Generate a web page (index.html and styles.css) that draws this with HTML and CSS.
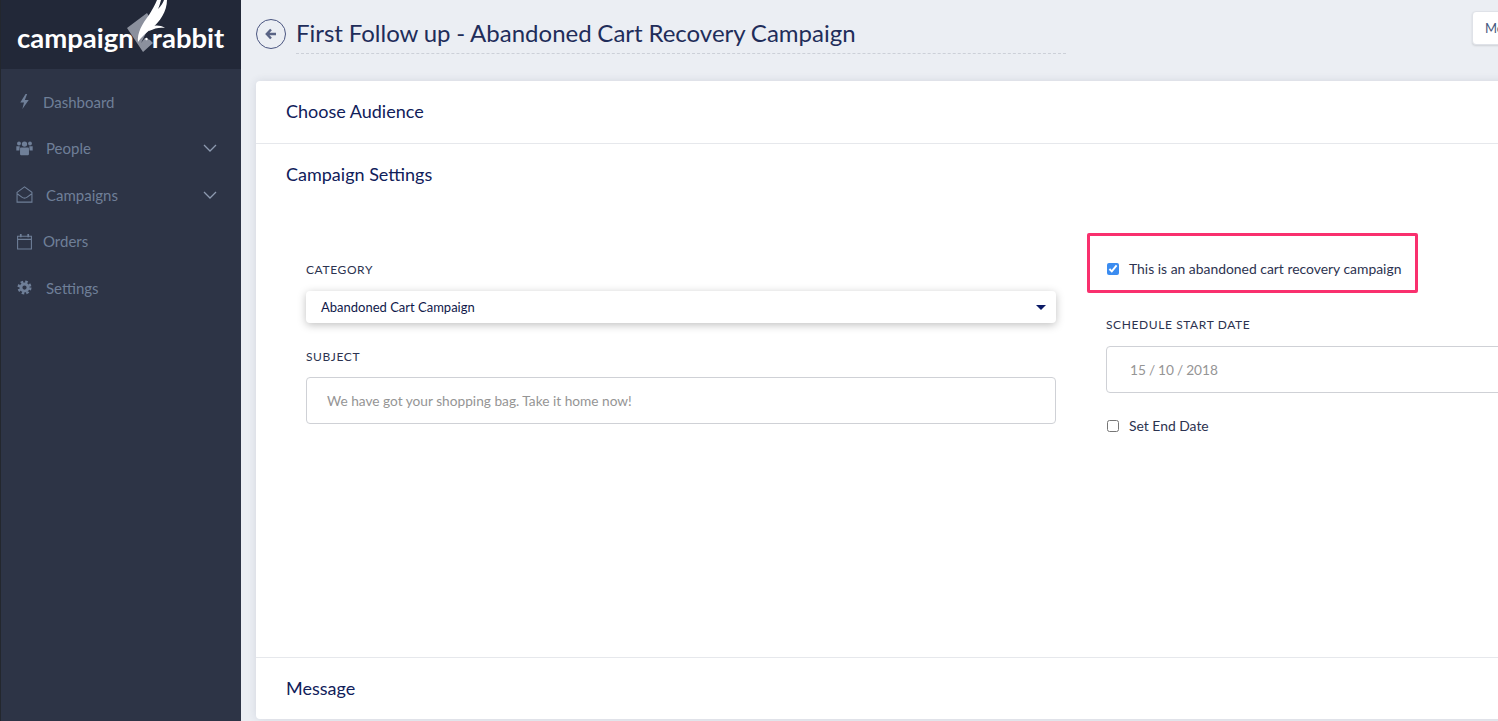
FILE: index.html
```html
<!DOCTYPE html>
<html lang="en">
<head>
    <meta charset="UTF-8">
    <meta name="viewport" content="width=device-width, initial-scale=1.0">
    <title>First Follow up - Abandoned Cart Recovery Campaign</title>
    <link rel="stylesheet" href="styles.css">
</head>
<body>
    <aside class="sidebar">
        <div class="logo">
            <span class="logo-word">campaign</span>
            <span class="logo-word">rabbit</span>
            <svg class="logo-mark" viewBox="120 0 60 60" width="60" height="60">
                <polygon fill="#8b909d" points="127,28 147,13 154,24 146,33 141,43 145,38 150,40 153,43 143,52"/>
                <path fill="#fff" d="M167 0C167 11 160 22 151 29C146 33 141 37 138 42C137 33 142 24 149 15C152 10 155 5 157 0L161 0C160 4 159 7 158 9C161 6 163 3 164 0Z"/>
                <path fill="#fff" d="M150 27C155 25 160 25 165 28C160 27 155 28 149 31Z"/>
                <circle fill="#fff" cx="146.500" cy="39" r="1.200"/>
            </svg>
        </div>
        <nav class="nav">
            <a class="nav-item nav-item-narrow">
                <svg class="nav-icon" viewBox="0 0 16 16"><polygon points="9,1 4,9 7.500,9 6,15 12,6.500 8.300,6.500 10.500,1"/></svg>
                Dashboard
            </a>
            <a class="nav-item">
                <svg class="nav-icon" viewBox="0 0 16 16">
                    <circle cx="2.800" cy="3.300" r="1.800"/><circle cx="13.200" cy="3.300" r="1.800"/><circle cx="8" cy="3.800" r="2.500"/>
                    <path d="M.3 5.800h3.200L3.200 9.800H.3zM12.500 5.800h3.200v4h-2.900zM4.800 7h6.400c.8 0 1 .6 1 1.300V13.500c0 .5-.3.800-.8.800H4.600c-.5 0-.8-.3-.8-.8V8.300C3.800 7.600 4 7 4.800 7z"/>
                </svg>
                People
                <svg class="chevron" viewBox="0 0 14 8"><path d="M1 1l6 6 6-6"/></svg>
            </a>
            <a class="nav-item">
                <svg class="nav-icon nav-icon-line" viewBox="0 0 16 16"><path d="M1 6L8 .8 15 6V15.200H1zM1.500 7.500l4 3c1.500 1.100 3.500 1.100 5 0l4-3"/></svg>
                Campaigns
                <svg class="chevron" viewBox="0 0 14 8"><path d="M1 1l6 6 6-6"/></svg>
            </a>
            <a class="nav-item nav-item-narrow">
                <svg class="nav-icon nav-icon-line" viewBox="0 0 16 16"><path d="M1.500 3h13v12h-13zM1.500 6h13"/><path class="cal-rings" d="M4.500 1v3M11.500 1v3"/></svg>
                Orders
            </a>
            <a class="nav-item">
                <svg class="nav-icon" viewBox="0 0 16 16">
                    <circle class="cog-teeth" cx="8" cy="8" r="5.500"/>
                    <circle class="cog-ring" cx="8" cy="8" r="3.400"/>
                </svg>
                Settings
            </a>
        </nav>
    </aside>

    <main class="main">
        <header class="topbar">
            <button class="back-btn" type="button">
                <svg viewBox="0 0 12 12" width="12" height="12"><path d="M6 1.500L1.800 6 6 10.500M2 6h9"/></svg>
            </button>
            <h1 class="page-title">First Follow up - Abandoned Cart Recovery Campaign</h1>
            <button class="top-btn" type="button">Me</button>
        </header>

        <div class="card">
            <section class="card-row">
                <h2>Choose Audience</h2>
            </section>
            <section class="card-row settings">
                <h2>Campaign Settings</h2>
                <div class="form-cols">
                    <div class="form-col form-col-left">
                        <label class="field-label">Category</label>
                        <div class="select-box">
                            Abandoned Cart Campaign
                            <span class="caret"></span>
                        </div>
                        <label class="field-label subject-label">Subject</label>
                        <div class="text-input">We have got your shopping bag. Take it home now!</div>
                    </div>
                    <div class="form-col">
                        <div class="highlight">
                            <label class="check-row">
                                <input type="checkbox" checked>
                                This is an abandoned cart recovery campaign
                            </label>
                        </div>
                        <label class="field-label schedule-label">Schedule start date</label>
                        <div class="text-input date-input">15 / 10 / 2018</div>
                        <label class="check-row end-date">
                            <input type="checkbox">
                            Set End Date
                        </label>
                    </div>
                </div>
            </section>
            <section class="card-row last-row">
                <h2>Message</h2>
            </section>
        </div>
    </main>
</body>
</html>
```

FILE: styles.css
```css
* {
    margin: 0;
    padding: 0;
    box-sizing: border-box;
}

html, body {
    height: 100%;
    overflow: hidden;
}

body {
    font-family: Lato, "Liberation Sans", sans-serif;
    background-color: #ebeef3;
    color: #10205a;
    display: flex;
}

/* Sidebar */
.sidebar {
    width: 241px;
    flex-shrink: 0;
    background-color: #2d3446;
    border-left: 1px solid #23272e;
}

.logo {
    position: relative;
    height: 69px;
    background-color: #222838;
    color: #fff;
    font-size: 27.500px;
    font-weight: 700;
    display: flex;
    align-items: center;
    gap: 18px;
    padding: 6px 0 0 16px;
}

.logo-word {
    position: relative;
    z-index: 1;
}

.logo-mark {
    position: absolute;
    left: 119px;
    top: 0;
}

.nav {
    padding-top: 9.400px;
}

.nav-item {
    height: 46.500px;
    display: flex;
    align-items: center;
    gap: 13px;
    padding: 0 24px 0 15px;
    color: #6f7f98;
    font-size: 15px;
}

.nav-item-narrow {
    gap: 10px;
}

.nav-icon {
    width: 17px;
    height: 17px;
    fill: #6f7f98;
    flex-shrink: 0;
}

.nav-icon-line {
    fill: none;
    stroke: #6f7f98;
    stroke-width: 1;
}

.cal-rings {
    stroke-width: 1.600;
}

.cog-teeth {
    fill: none;
    stroke: #6f7f98;
    stroke-width: 2.200;
    stroke-dasharray: 2.400 1.920;
}

.cog-ring {
    fill: none;
    stroke: #6f7f98;
    stroke-width: 2.800;
}

.chevron {
    width: 14px;
    height: 8px;
    margin-left: auto;
    fill: none;
    stroke: #8d9ab0;
    stroke-width: 1.300;
}

/* Main */
.main {
    flex: 1;
    min-width: 0;
    overflow: hidden;
}

.topbar {
    height: 81px;
    display: flex;
    align-items: flex-start;
    padding-left: 15px;
}

.back-btn {
    width: 30px;
    height: 30px;
    margin-top: 19px;
    flex-shrink: 0;
    border: 1px solid #4a5580;
    border-radius: 50%;
    background: none;
    display: flex;
    align-items: center;
    justify-content: center;
}

.back-btn svg {
    fill: none;
    stroke: #5a6485;
    stroke-width: 2.400;
}

.page-title {
    width: 770px;
    height: 54px;
    margin-left: 10px;
    padding-top: 16px;
    flex-shrink: 0;
    font-size: 24px;
    line-height: 34px;
    word-spacing: -0.400px;
    font-weight: 400;
    color: #1f2d5a;
    border-bottom: 1px dashed #ccd0d8;
}

.top-btn {
    width: 80px;
    height: 34px;
    margin: 11px 0 0 406px;
    flex-shrink: 0;
    padding-left: 12px;
    text-align: left;
    font-family: inherit;
    font-size: 13px;
    color: #44587e;
    background-color: #fff;
    border: 1px solid #dfe2e8;
    border-radius: 4px;
    box-shadow: 0 1px 2px rgba(0, 0, 0, 0.12);
}

.card {
    width: 1300px;
    margin-left: 15px;
    height: 638px;
    background-color: #fff;
    border-radius: 4px;
    box-shadow: 0 0 8px rgba(40, 50, 80, 0.12);
}

.card-row {
    height: 63px;
    padding: 19px 30px;
    border-bottom: 1px solid #e6e8ec;
}

.card-row h2 {
    font-size: 18px;
    line-height: 22px;
    font-weight: 400;
    color: #10205a;
}

.settings {
    height: 514px;
}

.last-row {
    height: 61px;
    border-bottom: none;
}

.form-cols {
    display: flex;
    gap: 50px;
    margin: 48px 0 0 20px;
}

.form-col {
    width: 750px;
    flex-shrink: 0;
}

.form-col-left {
    padding-top: 29px;
}

.field-label {
    display: block;
    font-size: 12px;
    line-height: 15px;
    letter-spacing: 0.600px;
    text-transform: uppercase;
    color: #2c3350;
}

.select-box {
    position: relative;
    height: 32px;
    margin-top: 14px;
    padding-left: 15px;
    font-size: 13px;
    line-height: 32px;
    color: #10184a;
    background-color: #fff;
    border-radius: 4px;
    box-shadow: 0 2px 8px rgba(0, 0, 0, 0.25);
}

.caret {
    position: absolute;
    right: 10px;
    top: 14px;
    border-top: 5px solid #0b1a66;
    border-left: 5px solid transparent;
    border-right: 5px solid transparent;
}

.subject-label {
    margin-top: 26px;
}

.text-input {
    height: 47px;
    margin-top: 13px;
    padding-left: 20px;
    font-size: 13.700px;
    line-height: 46px;
    color: #959595;
    border: 1px solid #cfd1d6;
    border-radius: 4px;
}

.date-input {
    margin-top: 14px;
    padding-left: 23px;
    word-spacing: -0.500px;
}

/* pink annotation around the checkbox */
.highlight {
    width: 331px;
    height: 60px;
    margin-left: -19px;
    padding: 12px 0 0 17px;
    display: flex;
    align-items: center;
    border: 3px solid #f9306e;
    border-radius: 2px;
}

.check-row {
    display: flex;
    align-items: center;
    gap: 10px;
    font-size: 13.900px;
    line-height: 16px;
    color: #2c3350;
}

.check-row input {
    width: 12px;
    height: 12px;
    margin: 0;
    flex-shrink: 0;
    accent-color: #3b8cf0;
}

.schedule-label {
    margin-top: 24px;
}

.end-date {
    margin: 25px 0 0 1px;
}
```
